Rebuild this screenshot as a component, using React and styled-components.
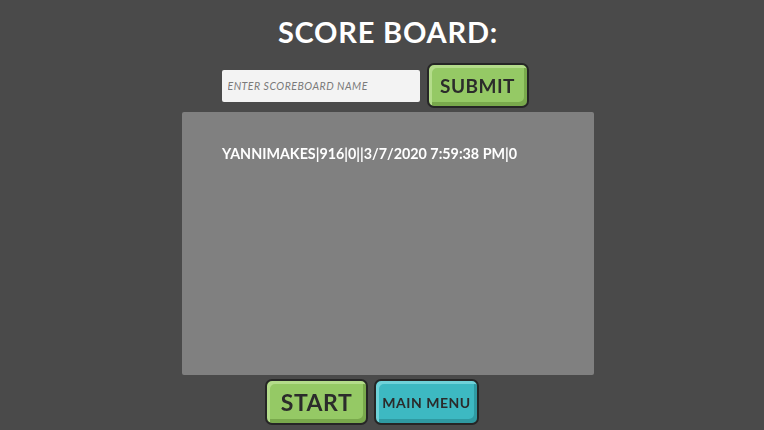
import React from 'react';
import styled, { createGlobalStyle } from 'styled-components';

const GlobalStyle = createGlobalStyle`
  html, body {
    margin: 0;
    padding: 0;
    background-color: #4a4a4a;
  }
  body {
    font-family: 'Lato', 'Open Sans', sans-serif;
  }
`

const Page = styled.div`
  width: 764px;
  height: 430px;
  display: flex;
  flex-direction: column;
  align-items: center;
  background-color: #4a4a4a;
  overflow: hidden;
`

const Title = styled.h1`
  margin: 15px 0 0 12px;
  height: 34px;
  line-height: 34px;
  font-family: 'Lato', sans-serif;
  font-weight: 700;
  font-size: 29px;
  letter-spacing: 0.8px;
  color: #ffffff;
`

const Row = styled.div`
  display: flex;
  align-items: center;
  gap: ${p => p.gap}px;
  margin-right: ${p => p.shift}px;
  margin-top: ${p => p.top}px;
`

const NameInput = styled.input`
  box-sizing: border-box;
  width: 198px;
  height: 32px;
  border: none;
  border-radius: 2px;
  background-color: #f3f3f3;
  padding: 0 6px;
  font-family: 'Lato', sans-serif;
  font-size: 10.5px;
  outline: none;
  caret-color: #555;

  &::placeholder {
    color: #7a7a7a;
    font-style: italic;
    letter-spacing: 0.5px;
  }
`

const GameButton = styled.button`
  box-sizing: border-box;
  width: ${p => p.w}px;
  height: ${p => p.h}px;
  border: 2.5px solid #262626;
  border-radius: 7px;
  background-color: ${p => p.color};
  box-shadow:
    inset 3px 3px 0 ${p => p.light},
    inset -3px -4px 0 ${p => p.dark};
  color: #2b2b2b;
  font-family: 'Lato', sans-serif;
  font-weight: 700;
  font-size: ${p => p.size}px;
  letter-spacing: 0.5px;
  padding: 0;
  cursor: pointer;
`

const Board = styled.div`
  box-sizing: border-box;
  width: 412px;
  height: 263px;
  margin-top: 4px;
  margin-left: 12px;
  background-color: #808080;
  border-radius: 2px;
  padding: 33px 0 0 40px;
`

const Entry = styled.div`
  font-family: 'Lato', sans-serif;
  font-weight: 700;
  font-size: 14.3px;
  letter-spacing: 0;
  color: #ffffff;
`

const green = { color: '#95c965', light: '#b4dc8a', dark: '#79a94c' }
const teal = { color: '#3db9c2', light: '#6fd2d9', dark: '#2f9aa2' }

export default function App() {
  return (
    <Page>
      <GlobalStyle />
      <Title>SCORE BOARD:</Title>
      <Row gap={7} shift={14} top={14}>
        <NameInput placeholder="ENTER SCOREBOARD NAME" autoFocus />
        <GameButton w={102} h={45} size={19} {...green}>SUBMIT</GameButton>
      </Row>
      <Board>
        <Entry>YANNIMAKES|916|0||3/7/2020 7:59:38 PM|0</Entry>
      </Board>
      <Row gap={6} shift={20} top={4}>
        <GameButton w={103} h={46} size={23} {...green}>START</GameButton>
        <GameButton w={105} h={46} size={14} {...teal}>MAIN MENU</GameButton>
      </Row>
    </Page>
  );
}
